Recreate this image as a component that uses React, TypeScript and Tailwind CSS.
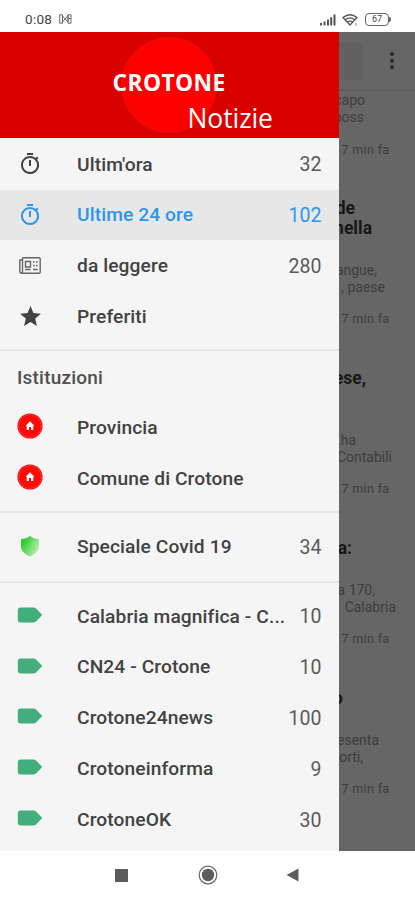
import type { ReactNode } from 'react'
import { MdOutlineTimer, MdStar } from 'react-icons/md'

interface Row {
  label: string
  count?: number
  icon: ReactNode
  active?: boolean
}

interface Article {
  title: { text: string; pad: string }[]
  body: { text: string; pad: string }[]
}

function HomeBadge() {
  return (
    <svg viewBox="0 0 26 26" className="w-[26px] h-[26px] -mt-0.5">
      <circle cx="13" cy="13" r="12.6" fill="#ff0808" />
      <circle cx="13" cy="13" r="11.2" fill="none" stroke="#ff7070" strokeWidth="0.6" strokeDasharray="2 1" />
      <path d="M13 8.3 8.6 12.7h1.1v4.2h2.3v-2.8h2v2.8h2.3v-4.2h1.1z" fill="#fff" />
    </svg>
  )
}

function Newspaper() {
  return (
    <svg viewBox="0 0 22 17" className="w-[22px] h-[17px]" fill="none" stroke="#666" strokeWidth="1.4">
      <path d="M3.500.8H20.200Q21.200.8 21.200 1.800V15.200Q21.200 16.200 20.200 16.200H2.500Q.8 16.200.8 14.500V3H3.200M3.500.8V14.500Q3.500 16 2.200 16.200" />
      <path d="M6.500 4.500h5v5.500h-5zM14 5h1.600M17 5h1.600M14 8.500h1.600M17 8.500h1.600M6 12.500h5.500M14 12.500h4.600" />
    </svg>
  )
}

function Shield() {
  return (
    <svg viewBox="0 0 20 22" className="w-5 h-[22px] -mt-0.5">
      <defs>
        <linearGradient id="shield" x1="0" y1="0.2" x2="1" y2="0.8">
          <stop offset="0.15" stopColor="#2fcb2f" />
          <stop offset="0.5" stopColor="#6fdc69" />
          <stop offset="1" stopColor="#c5f3c0" />
        </linearGradient>
      </defs>
      <path d="M10 .8C8.5 2.8 5 3.8 1 4v7c0 5 4.500 8.500 9 10.500 4.500-2 9-5.500 9-10.500V4C15 3.800 11.500 2.800 10 .8z" fill="url(#shield)" />
    </svg>
  )
}

function Tag() {
  return (
    <svg viewBox="0 0 26 16" className="w-[26px] h-4 -mt-[3px]">
      <path d="M3.500.5H16.500Q18 .5 19 1.500L25.300 8 19 14.500Q18 15.500 16.500 15.500H3.500Q.8 15.500.8 12.500V3.500Q.8.500 3.500.5z" fill="#44ad7d" />
    </svg>
  )
}

const mainRows: Row[] = [
  { label: "Ultim'ora", count: 32, icon: <MdOutlineTimer size={24} /> },
  { label: 'Ultime 24 ore', count: 102, icon: <MdOutlineTimer size={24} />, active: true },
  { label: 'da leggere', count: 280, icon: <Newspaper /> },
  { label: 'Preferiti', icon: <MdStar size={25} /> },
]

const institutions: Row[] = [
  { label: 'Provincia', icon: <HomeBadge /> },
  { label: 'Comune di Crotone', icon: <HomeBadge /> },
]

const sources: Row[] = [
  { label: 'Calabria magnifica - C...', count: 10, icon: <Tag /> },
  { label: 'CN24 - Crotone', count: 10, icon: <Tag /> },
  { label: 'Crotone24news', count: 100, icon: <Tag /> },
  { label: 'Crotoneinforma', count: 9, icon: <Tag /> },
  { label: 'CrotoneOK', count: 30, icon: <Tag /> },
]

const articles: Article[] = [
  {
    title: [{ text: 'de', pad: 'pr-[60px]' }, { text: 'nella', pad: 'pr-[43px]' }],
    body: [{ text: 'angue,', pad: 'pr-[38px]' }, { text: ', paese', pad: 'pr-[30px]' }],
  },
  {
    title: [{ text: 'ese,', pad: 'pr-[49px]' }, { text: '', pad: '' }],
    body: [{ text: 'ha', pad: 'pr-[59px]' }, { text: 'Contabili', pad: 'pr-[23px]' }],
  },
  {
    title: [{ text: 'a:', pad: 'pr-[63px]' }],
    body: [{ text: 'a 170,', pad: 'pr-[40px]' }, { text: 'Calabria', pad: 'pr-[19px]' }],
  },
  {
    title: [{ text: 'o', pad: 'pr-[72px]' }],
    body: [{ text: 'esenta', pad: 'pr-[36px]' }, { text: 'orti,', pad: 'pr-[52px]' }],
  },
]

function DrawerRow({ row }: { row: Row }) {
  return (
    <div
      className={`flex h-[50.8px] shrink-0 items-center pl-[17px] pr-[17px] text-[19.2px] ${
        row.active ? 'bg-[#e7e7e7] text-[#2d96ec]' : 'text-[#424242]'
      }`}
    >
      <span className="flex w-[26px] shrink-0 justify-center">{row.icon}</span>
      <span className="ml-[34px] flex-1 whitespace-nowrap pt-[1.5px] font-medium tracking-[0.1px]">{row.label}</span>
      {row.count !== undefined && (
        <span className={`pt-[1.5px] text-[19.5px] ${row.active ? '' : 'text-[#5a5a5a]'}`}>{row.count}</span>
      )}
    </div>
  )
}

function Divider() {
  return <div className="h-[2px] shrink-0 bg-[#e6e6e6]" />
}

function Time() {
  return (
    <p className="mt-[15px] flex h-4 items-center justify-end whitespace-nowrap pr-[25.5px] text-[12.5px] tracking-[0.35px]">
      17 min fa
    </p>
  )
}

function StatusBar() {
  return (
    <div className="flex h-8 shrink-0 items-center justify-between pl-[25px] pr-6 pt-[7px] text-[#444]">
      <div className="flex items-center gap-[7px]">
        <span className="text-[13.5px] leading-none tracking-[0.3px]">0:08</span>
        <svg viewBox="0 0 13 10" className="w-[13px] h-[10px] -mt-px" fill="none" stroke="#666" strokeWidth="1">
          <path d="M.7.800H3.500V9.200H.7zM3.500 2 9 8V1.500L3.500 8M9 .8h3v8.400H9zM9 4.500h3" />
        </svg>
      </div>
      <div className="flex items-center gap-[6px]">
        <svg viewBox="0 0 16 12" className="w-4 h-3" fill="#555">
          <path d="M0 9h2v2.500H0zM3.500 7.500h2v4h-2zM7 5.500h2v6H7zM10.200 3.200h2v8.300h-2zM13.500.500h2v11h-2z" />
        </svg>
        <svg viewBox="0 0 17 14" className="w-[17px] h-[14px]" fill="none" stroke="#555" strokeWidth="1.300">
          <path d="M1 4.500Q8 -1 15 4.500L8 12zM3.200 6.700Q8 3 12.800 6.700M5.500 9.200Q8 7 10.500 9.200" />
          <path d="M14 10v3" stroke="#aaa" />
        </svg>
        <div className="flex items-center">
          <span className="flex h-[13px] w-[24px] items-center justify-center rounded-[4px] border-[1.5px] border-[#666] text-[9px] leading-none">
            67
          </span>
          <span className="h-[5px] w-[2px] rounded-r bg-[#666]" />
        </div>
      </div>
    </div>
  )
}

function Header() {
  return (
    <div className="relative h-[106px] shrink-0 bg-[#d90000] pt-[37px] font-['Open_Sans','Noto_Sans',sans-serif] text-white">
      <div className="absolute left-[121px] top-[5px] h-24 w-24 rounded-full border border-[#e51200] bg-[#ff0000]" />
      <p className="relative pl-[112.5px] text-[22.8px] font-bold leading-[27px] tracking-[0.4px]">CROTONE</p>
      <p className="relative pl-[187.5px] pt-[7px] text-[26.5px] leading-[30px] tracking-[-0.1px]">Notizie</p>
    </div>
  )
}

function Feed() {
  return (
    <div className="flex min-w-0 flex-1 flex-col overflow-hidden bg-[#666666] text-[14px] text-[#3d3d3d]">
      <div className="flex h-[59px] shrink-0 items-center justify-between border-b-2 border-[#606060] pr-[21px]">
        <div className="h-[38px] w-6 rounded-r bg-[#616161]" />
        <div className="flex flex-col gap-[2.5px]">
          <span className="h-1 w-1 rounded-full bg-[#272727]" />
          <span className="h-1 w-1 rounded-full bg-[#272727]" />
          <span className="h-1 w-1 rounded-full bg-[#272727]" />
        </div>
      </div>
      <div className="pt-[1.2px] leading-[17px]">
        <p className="flex justify-end whitespace-nowrap pr-[50px]">capo</p>
        <p className="flex justify-end whitespace-nowrap pr-[51px]">boss</p>
        <Time />
      </div>
      {articles.map((article, i) => (
        <div key={i} className="pt-[41px]">
          {article.title.map((line, j) => (
            <h3 key={j} className={`flex h-5 items-center justify-end text-[17.5px] font-bold text-[#171717] ${line.pad}`}>
              {line.text}
            </h3>
          ))}
          <div className="pt-[24px] leading-[17px]">
            {article.body.map((line, j) => (
              <p key={j} className={`flex justify-end whitespace-nowrap ${line.pad}`}>
                {line.text}
              </p>
            ))}
          </div>
          <Time />
        </div>
      ))}
    </div>
  )
}

export default function App() {
  return (
    <div className="flex h-[900px] w-[415px] flex-col overflow-hidden bg-white font-['Roboto',sans-serif]">
      <StatusBar />
      <div className="flex h-[818.5px] shrink-0">
        <div className="flex w-[338.5px] shrink-0 flex-col overflow-hidden bg-[#f5f5f5]">
          <Header />
          <div className="pt-[0.8px]">
            {mainRows.map(row => <DrawerRow key={row.label} row={row} />)}
          </div>
          <div className="h-[7px] shrink-0" />
          <Divider />
          <p className="mt-[14px] h-[25px] shrink-0 pl-[17px] text-[19px] font-medium leading-[25px] tracking-[0.2px] text-[#505050]">
            Istituzioni
          </p>
          <div className="pt-[12px]">
            {institutions.map(row => <DrawerRow key={row.label} row={row} />)}
          </div>
          <div className="h-[7.5px] shrink-0" />
          <Divider />
          <div className="py-[8.5px]">
            <DrawerRow row={{ label: 'Speciale Covid 19', count: 34, icon: <Shield /> }} />
          </div>
          <Divider />
          <div className="pt-[8px]">
            {sources.map(row => <DrawerRow key={row.label} row={row} />)}
          </div>
        </div>
        <Feed />
      </div>
      <div className="flex flex-1 items-center pl-[115px]">
        <span className="h-[13px] w-[13px] bg-[#5c5c5c]" />
        <svg viewBox="0 0 20 20" className="ml-[70px] w-5 h-5">
          <circle cx="10" cy="10" r="8.800" fill="none" stroke="#666" strokeWidth="1.200" />
          <circle cx="10" cy="10" r="6.200" fill="#5c5c5c" />
        </svg>
        <svg viewBox="0 0 13 14" className="ml-[68px] w-[13px] h-[14px]">
          <path d="M12.500.5v13L.5 7z" fill="#5c5c5c" />
        </svg>
      </div>
    </div>
  )
}
